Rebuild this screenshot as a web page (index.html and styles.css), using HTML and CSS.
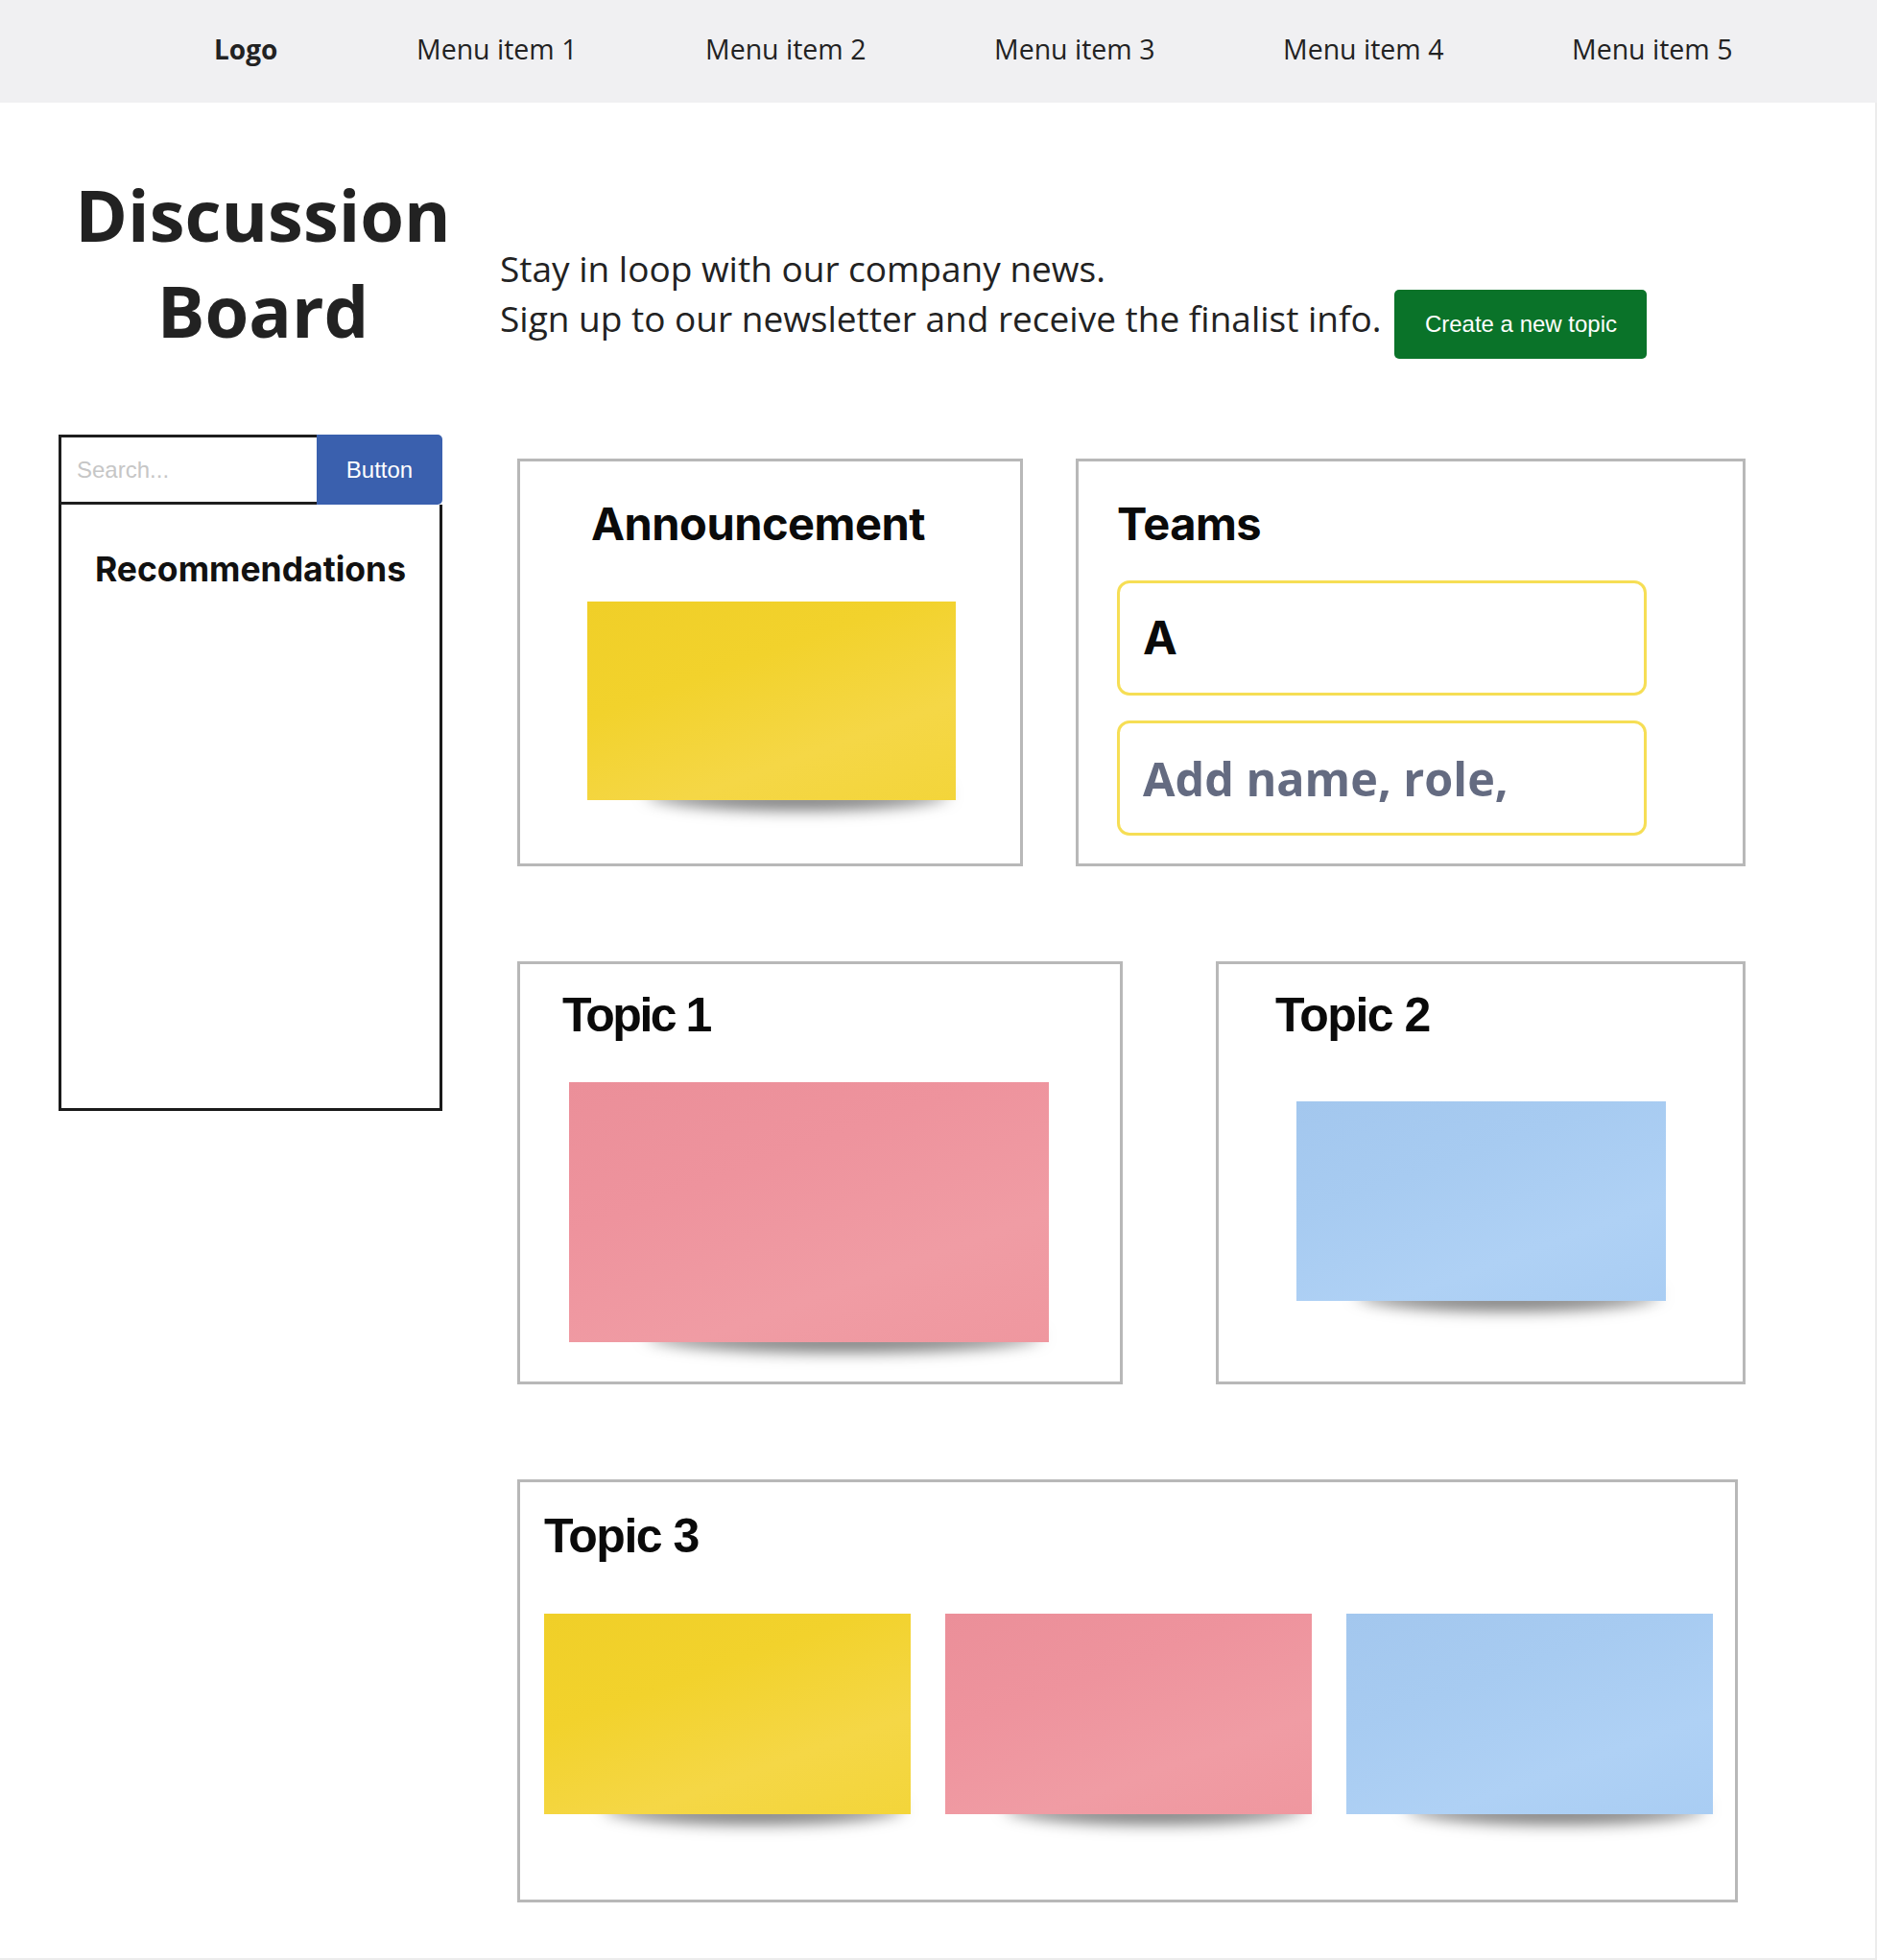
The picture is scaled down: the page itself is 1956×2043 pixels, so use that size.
FILE: index.html
```html
<!DOCTYPE html>
<html lang="en">
<head>
<meta charset="utf-8">
<title>Discussion Board</title>
<link rel="stylesheet" href="styles.css">
</head>
<body>
<header class="nav">
  <a class="nav-logo">Logo</a>
  <a class="nav-item">Menu item 1</a>
  <a class="nav-item">Menu item 2</a>
  <a class="nav-item">Menu item 3</a>
  <a class="nav-item">Menu item 4</a>
  <a class="nav-item">Menu item 5</a>
</header>
<main class="page">
  <section class="hero">
    <h1 class="hero-title">Discussion<br>Board</h1>
    <p class="hero-text">Stay in loop with our company news.<br>Sign up to our newsletter and receive the finalist info.</p>
    <button class="btn-create" type="button">Create a new topic</button>
  </section>
  <div class="content">
    <aside class="sidebar">
      <form class="search">
        <input class="search-input" type="text" placeholder="Search...">
        <button class="search-btn" type="button">Button</button>
      </form>
      <div class="recs">
        <h2 class="recs-title">Recommendations</h2>
      </div>
    </aside>
    <div class="board">
      <div class="row">
        <section class="card card-announce">
          <h3 class="card-title geo">Announcement</h3>
          <div class="note note-yellow note-announce"></div>
        </section>
        <section class="card card-teams">
          <h3 class="card-title geo">Teams</h3>
          <div class="team-box team-box-first"><span class="team-letter">A</span></div>
          <div class="team-box"><span class="team-placeholder">Add name, role,</span></div>
        </section>
      </div>
      <div class="row">
        <section class="card card-t1">
          <h3 class="card-title topic">Topic 1</h3>
          <div class="note note-pink note-t1"></div>
        </section>
        <section class="card card-t2">
          <h3 class="card-title topic">Topic 2</h3>
          <div class="note note-blue note-t2"></div>
        </section>
      </div>
      <div class="row">
        <section class="card card-t3">
          <h3 class="card-title topic">Topic 3</h3>
          <div class="notes-row">
            <div class="note note-yellow note-t3"></div>
            <div class="note note-pink note-t3"></div>
            <div class="note note-blue note-t3"></div>
          </div>
        </section>
      </div>
    </div>
  </div>
</main>
</body>
</html>
```

FILE: styles.css
```css
* { box-sizing: border-box; }

body {
  margin: 0;
  font-family: "Open Sans", "Liberation Sans", sans-serif;
  color: #222;
  background: #fff;
}

/* Navigation */
.nav {
  height: 107px;
  background: #f0f0f2;
  display: flex;
  align-items: center;
  padding-left: 223px;
  padding-bottom: 5px;
}
.nav-logo {
  width: 211px;
  font-size: 28px;
  font-weight: 700;
  color: #222;
}
.nav-item {
  width: 301px;
  font-size: 28.5px;
  color: #222;
}

/* Page frame */
.page {
  width: 1956px;
  height: 1936px;
  border-right: 2px solid #ececec;
  border-bottom: 2px solid #ececec;
  padding-left: 61px;
}

/* Hero */
.hero {
  display: flex;
  align-items: flex-start;
  padding-top: 67px;
}
.hero-title {
  margin: 0;
  width: 426px;
  text-align: center;
  font-size: 74px;
  line-height: 100px;
  font-weight: 700;
  color: #222;
}
.hero-text {
  margin: 80px 0 0 34px;
  font-size: 37px;
  line-height: 52px;
  white-space: nowrap;
  color: #222;
}
.btn-create {
  margin: 128px 0 0 14px;
  width: 263px;
  height: 72px;
  background: #0a7329;
  color: #fff;
  border: 0;
  border-radius: 5px;
  font-family: "Liberation Sans", Arial, sans-serif;
  font-size: 24px;
}

/* Content */
.content {
  display: flex;
  align-items: flex-start;
  margin-top: 79px;
}

.sidebar {
  width: 400px;
}
.search {
  display: flex;
  height: 73px;
  margin: 0;
}
.search-input {
  flex: 1;
  min-width: 0;
  border: 3px solid #1e1e1e;
  border-right: 0;
  padding: 0 0 0 16px;
  font-family: "Liberation Sans", Arial, sans-serif;
  font-size: 24px;
  color: #222;
  outline: none;
}
.search-input::placeholder {
  color: #c6c6c6;
}
.search-btn {
  width: 131px;
  background: #3a60ae;
  color: #fff;
  border: 0;
  border-radius: 0 5px 5px 0;
  font-family: "Liberation Sans", Arial, sans-serif;
  font-size: 24px;
}
.recs {
  height: 632px;
  border: 3px solid #1a1a1a;
  border-top: 0;
  text-align: center;
  padding-top: 50px;
}
.recs-title {
  margin: 0;
  font-family: "Inter", "Liberation Sans", sans-serif;
  font-size: 35.5px;
  line-height: 1;
  font-weight: 700;
  color: #111;
}

/* Board */
.board {
  margin-left: 78px;
  margin-top: 25px;
  display: flex;
  flex-direction: column;
  gap: 99px;
}
.row {
  display: flex;
}
.card {
  border: 3px solid #b8b8b8;
  background: #fff;
  position: relative;
  isolation: isolate;
  display: flex;
  flex-direction: column;
  align-items: flex-start;
}
.card-title {
  margin: 0;
  line-height: 1;
  font-weight: 700;
  color: #0a0a0a;
}
.card-title.geo {
  font-family: "Inter", "Liberation Sans", sans-serif;
  font-size: 47px;
  letter-spacing: -0.5px;
}
.card-title.topic {
  font-family: "Liberation Sans", Arial, sans-serif;
  font-size: 50px;
  letter-spacing: -1.5px;
}

.card-announce {
  width: 527px;
  height: 425px;
  padding: 41px 0 0 70px;
}
.card-announce .card-title { margin-left: 4px; }
.note-announce {
  margin-top: 58px;
  width: 384px;
  height: 207px;
}

.card-teams {
  width: 698px;
  height: 425px;
  margin-left: 55px;
  padding: 41px 0 0 40px;
}
.team-box {
  width: 552px;
  height: 120px;
  border: 3px solid #f6de55;
  border-radius: 13px;
  display: flex;
  align-items: center;
  padding-left: 24px;
  margin-top: 26px;
}
.team-box-first { margin-top: 36px; }
.team-letter {
  font-family: "Inter", "Liberation Sans", sans-serif;
  font-size: 48px;
  line-height: 1;
  font-weight: 700;
  color: #0a0a0a;
}
.team-placeholder {
  font-family: "Open Sans", sans-serif;
  font-size: 48.5px;
  line-height: 1;
  font-weight: 700;
  color: #646b81;
}

.card-t1 {
  width: 631px;
  height: 441px;
  padding: 28px 0 0 44px;
}
.card-t1 .card-title { letter-spacing: -2.5px; }
.note-t1 {
  margin: 45px 0 0 7px;
  width: 500px;
  height: 271px;
}
.card-t2 {
  width: 552px;
  height: 441px;
  margin-left: 97px;
  padding: 28px 0 0 59px;
}
.note-t2 {
  margin: 65px 0 0 22px;
  width: 385px;
  height: 208px;
}
.card-t3 {
  width: 1272px;
  height: 441px;
  padding: 31px 0 0 25px;
}
.notes-row {
  display: flex;
  gap: 36px;
  margin-top: 56px;
}
.note-t3 {
  width: 382px;
  height: 209px;
}

/* Sticky notes */
.note {
  position: relative;
}
.note::after {
  content: "";
  position: absolute;
  left: 16%;
  right: 1.5%;
  bottom: 4px;
  height: 18px;
  border-radius: 0 0 50% 50% / 0 0 100% 100%;
  background: rgba(0, 0, 0, 0.4);
  box-shadow: 0 14px 16px rgba(0, 0, 0, 0.55);
  z-index: -1;
}
.note-yellow {
  background: linear-gradient(160deg, #f0cf28 0%, #f2d22c 35%, #f5d746 70%, #f3d53a 100%);
}
.note-pink {
  background: linear-gradient(160deg, #eb8f99 0%, #ee939d 35%, #f09ca4 70%, #ef979f 100%);
}
.note-blue {
  background: linear-gradient(160deg, #a3c7ee 0%, #a7cbf1 35%, #afd1f5 70%, #a9cdf3 100%);
}
```
